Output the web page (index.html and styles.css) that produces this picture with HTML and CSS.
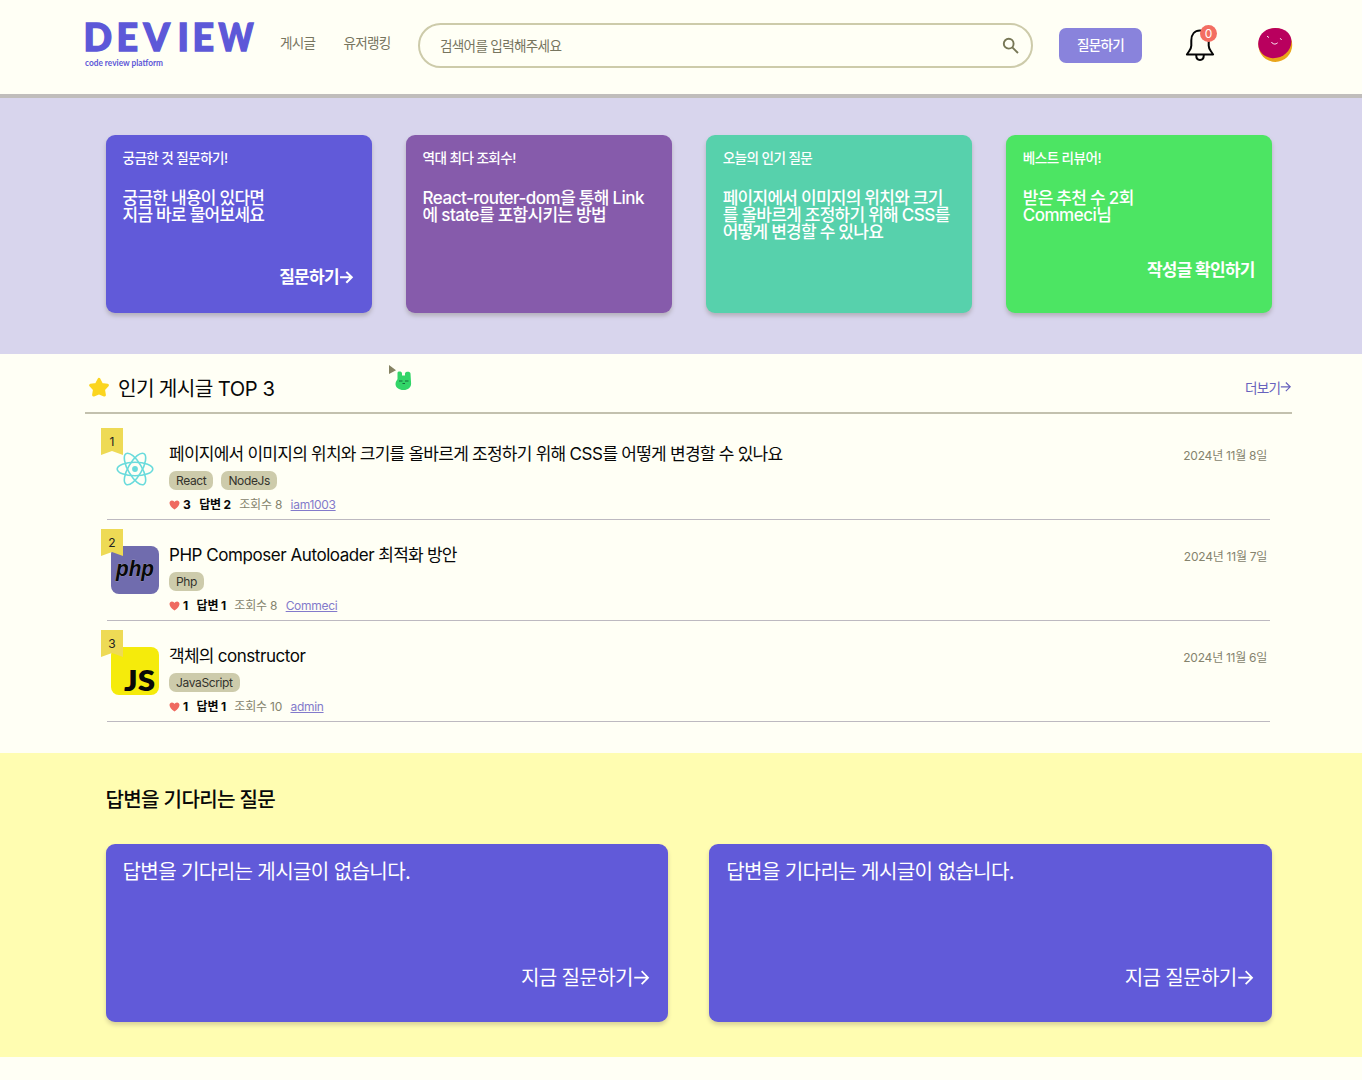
FILE: index.html
```html
<!DOCTYPE html>
<html lang="ko">
<head>
<meta charset="utf-8">
<title>DEVIEW</title>
<link rel="stylesheet" href="styles.css">
</head>
<body>
<header class="header">
  <a class="logo">
    <svg width="170" height="50" viewBox="0 0 170 50">
      <text class="logo-name" y="31" x="-1.500 31.500 58.500 92.500 107.500"><tspan>DEVIE</tspan><tspan x="133.500" textLength="35" lengthAdjust="spacingAndGlyphs">W</tspan></text>
      <text class="logo-sub" x="0" y="46" textLength="78" lengthAdjust="spacingAndGlyphs">code review platform</text>
    </svg>
  </a>
  <nav class="nav"><a>게시글</a><a>유저랭킹</a></nav>
  <div class="search">
    <span>검색어를 입력해주세요</span>
    <svg width="18" height="18" viewBox="0 0 18 18" fill="none" stroke="#777755" stroke-width="1.9"><circle cx="6.7" cy="6.7" r="4.9"/><path d="M10.3 10.3 16 16"/></svg>
  </div>
  <button class="ask">질문하기</button>
  <div class="bell">
    <svg width="32" height="34" viewBox="0 0 32 34" fill="none" stroke="#050505" stroke-width="2" stroke-linejoin="round"><path d="M7.3 12.5C7.3 6.3 10.8 2.5 16 2.5s8.7 3.8 8.7 10v5.2c0 3.6 2.2 5 4.4 8.8H2.9c2.2-3.8 4.4-5.2 4.4-8.8z"/><path d="M12.2 27c0 6.5 7.6 6.5 7.6 0"/></svg>
    <span class="badge">0</span>
  </div>
  <svg class="avatar" width="36" height="36" viewBox="0 0 36 36"><circle cx="18.3" cy="18" r="16.9" fill="#e9a51a"/><path d="M1.2 17C1.2 8 8 1.2 18 1.1 28 1 34.3 6.5 34.5 14.5 34 24 26 31.5 15.5 31.2 7 30.5 1.4 24.5 1.2 17z" fill="#b9005e"/><path d="M14.5 15.3c1.8 2.2 4 2.3 5.8.8M10.4 9.4l1.2.9M23.5 11.6l.8 1" stroke="#fff" fill="none" stroke-linecap="round"/></svg>
</header>

<section class="banner">
  <article class="card c1"><h3>궁금한 것 질문하기!</h3><p>궁금한 내용이 있다면<br>지금 바로 물어보세요</p><b>질문하기<svg class="arrow" viewBox="0 0 14 14"><path d="M1 7h11M7 1.8 12.2 7 7 12.2"/></svg></b></article>
  <article class="card c2"><h3>역대 최다 조회수!</h3><p><i>React-router-dom</i>을 통해 <i>Link</i><br>에 <i>state</i>를 포함시키는 방법</p></article>
  <article class="card c3"><h3>오늘의 인기 질문</h3><p>페이지에서 이미지의 위치와 크기<br>를 올바르게 조정하기 위해 <i>CSS</i>를<br>어떻게 변경할 수 있나요</p></article>
  <article class="card c4"><h3>베스트 리뷰어!</h3><p>받은 추천 수 <i>2</i>회<br><i>Commeci</i>님</p><b>작성글 확인하기</b></article>
</section>

<section class="popular">
  <div class="popular-head">
    <svg width="22" height="22" viewBox="0 0 22 22"><path d="M11 3.4 13.6 8.4 19.4 9.3 15.5 13.4 16.4 19 11 16.8 5.600 19 6.500 13.400 2.600 9.300 8.400 8.400z" fill="#fbd51f" stroke="#fbd51f" stroke-width="3" stroke-linejoin="round"/></svg>
    <h2>인기 게시글 <i>TOP 3</i></h2>
    <a class="more">더보기<svg class="arrow" viewBox="0 0 14 14"><path d="M1 7h11M7 1.8 12.2 7 7 12.2"/></svg></a>
    <svg class="cursor" width="26" height="28" viewBox="0 0 26 28"><path d="M1 1v9l7-3.7z" fill="#858262"/><path d="M9.500 9c0-2 4.500-2 4.500.5v2h3v-2c0-2.500 5.500-2.500 5.500 0l.6 10c0 4-3 6.500-7.600 6.500-4.500 0-8-2.500-8-6 0-3 2-4 2-5z" fill="#32d568"/><path d="M11 17h3.500M17 17h3.500M14.500 19.500h2.500" stroke="#176b3a"/></svg>
  </div>
  <div class="posts">
    <article class="post">
      <div class="thumb">
        <svg width="48" height="48" viewBox="0 0 48 48" fill="none" stroke="#69dbdc" stroke-width="1.6"><g transform="translate(24 24)"><ellipse rx="17.8" ry="6.8"/><ellipse rx="17.8" ry="6.8" transform="rotate(60)"/><ellipse rx="17.8" ry="6.8" transform="rotate(120)"/><circle r="2.9" fill="#69dbdc" stroke="none"/></g></svg>
        <span class="rank">1</span>
      </div>
      <div class="info">
        <h4>페이지에서 이미지의 위치와 크기를 올바르게 조정하기 위해 <i>CSS</i>를 어떻게 변경할 수 있나요</h4>
        <div class="tags"><span>React</span><span>NodeJs</span></div>
        <div class="stats"><b class="like"><svg viewBox="0 0 12 11"><path d="M6 10.5C-2 5 .3.5 3.2.5 4.6.5 5.6 1.3 6 2.2 6.4 1.3 7.4.5 8.8.5c2.9 0 5.2 4.5-2.8 10z"/></svg>3</b><b>답변 <i>2</i></b><span>조회수 <i>8</i></span><a>iam1003</a></div>
      </div>
      <time><i>2024</i>년 <i>11</i>월 <i>8</i>일</time>
    </article>
    <article class="post">
      <div class="thumb">
        <svg width="48" height="48" viewBox="0 0 48 48"><rect width="48" height="48" rx="8" fill="#706cae"/><text class="php" x="5" y="30" textLength="38" lengthAdjust="spacingAndGlyphs">php</text></svg>
        <span class="rank">2</span>
      </div>
      <div class="info">
        <h4><i>PHP Composer Autoloader</i> 최적화 방안</h4>
        <div class="tags"><span>Php</span></div>
        <div class="stats"><b class="like"><svg viewBox="0 0 12 11"><path d="M6 10.5C-2 5 .3.5 3.2.5 4.6.5 5.6 1.3 6 2.2 6.4 1.3 7.4.5 8.8.5c2.9 0 5.2 4.5-2.8 10z"/></svg>1</b><b>답변 <i>1</i></b><span>조회수 <i>8</i></span><a>Commeci</a></div>
      </div>
      <time><i>2024</i>년 <i>11</i>월 <i>7</i>일</time>
    </article>
    <article class="post">
      <div class="thumb">
        <svg width="48" height="48" viewBox="0 0 48 48"><rect width="48" height="48" rx="8" fill="#f5eb0b"/><text class="js" x="13" y="44" textLength="31" lengthAdjust="spacingAndGlyphs">JS</text></svg>
        <span class="rank">3</span>
      </div>
      <div class="info">
        <h4>객체의 <i>constructor</i></h4>
        <div class="tags"><span>JavaScript</span></div>
        <div class="stats"><b class="like"><svg viewBox="0 0 12 11"><path d="M6 10.5C-2 5 .3.5 3.2.5 4.6.5 5.6 1.3 6 2.2 6.4 1.3 7.4.5 8.8.5c2.9 0 5.2 4.5-2.8 10z"/></svg>1</b><b>답변 <i>1</i></b><span>조회수 <i>10</i></span><a>admin</a></div>
      </div>
      <time><i>2024</i>년 <i>11</i>월 <i>6</i>일</time>
    </article>
  </div>
</section>

<section class="waiting">
  <h2>답변을 기다리는 질문</h2>
  <div class="waiting-grid">
    <article class="wait-card"><p>답변을 기다리는 게시글이 없습니다.</p><a>지금 질문하기<svg class="arrow" viewBox="0 0 14 14"><path d="M1 7h11M7 1.8 12.2 7 7 12.2"/></svg></a></article>
    <article class="wait-card"><p>답변을 기다리는 게시글이 없습니다.</p><a>지금 질문하기<svg class="arrow" viewBox="0 0 14 14"><path d="M1 7h11M7 1.8 12.2 7 7 12.2"/></svg></a></article>
  </div>
</section>
</body>
</html>
```
FILE: styles.css
```css
* { box-sizing: border-box; margin: 0; padding: 0; }
body { background: #fffff5; color: #080808; font-family: Inter, "Noto Sans CJK KR", sans-serif; font-size: 13.6px; letter-spacing: -0.7px; overflow: hidden; }
i { font-style: normal; letter-spacing: -0.02em; }
svg { display: block; flex: none; }
.arrow { width: .86em; height: .86em; fill: none; stroke: currentColor; stroke-width: 1.4; }

.header { height: 98px; padding: 0 69px 0 85px; display: flex; align-items: flex-start; border-bottom: 4px solid #c0bdbb; }
.logo { width: 170px; margin-top: 20px; }
.logo svg { overflow: visible; }
.logo-name { font: 900 37.5px Lato, sans-serif; letter-spacing: 0; fill: #5d58d8; stroke: #5d58d8; stroke-width: 1.4; }
.logo-sub { font: 700 9px Lato, sans-serif; letter-spacing: 0; fill: #5d58d8; }
.nav { width: 138px; margin: 33px 0 0 25px; display: flex; gap: 28px; line-height: 20px; color: #77755f; white-space: nowrap; }
.search { width: 615px; height: 45px; margin-top: 23px; padding: 0 11px 0 20px; display: flex; align-items: center; justify-content: space-between; border: 2px solid #cdcbaa; border-radius: 23px; color: #77755f; }
.search span { margin-top: -2px; }
.ask { width: 83px; height: 35px; margin: 28px 0 0 26px; padding-bottom: 3px; border: 0; border-radius: 7px; background: #8983dc; color: #fff; font: 500 13.6px Inter, "Noto Sans CJK KR", sans-serif; letter-spacing: -0.7px; }
.bell { position: relative; margin: 28px 0 0 42px; }
.badge { position: absolute; left: 16px; top: -3px; width: 17px; height: 17px; border-radius: 50%; background: #f36e62; color: #fff; font-size: 12px; line-height: 17px; text-align: center; letter-spacing: 0; }
.avatar { margin: 27px 0 0 41px; }

.banner { height: 256px; padding: 37px 90px 0 105.5px; display: grid; grid-template-columns: repeat(4, 266px); gap: 34.1px; background: #d8d5ed; }
.card { height: 178px; padding: 14px 17px; display: flex; flex-direction: column; border-radius: 9px; color: #fff; box-shadow: 0 3px 4px #b4b0bb; white-space: nowrap; }
.c1 { background: #615ad9; }
.c2 { background: #865bab; }
.c3 { background: #57d1ac; }
.c4 { background: #4ce563; }
.card h3 { font-size: 13.6px; font-weight: 500; line-height: 19px; letter-spacing: -0.58px; }
.card p { margin-top: 22px; font-size: 17px; font-weight: 500; line-height: 17px; letter-spacing: -0.74px; }
.card p i { letter-spacing: -0.03em; }
.card b { display: flex; align-items: center; align-self: flex-end; margin-top: 43px; font-size: 17px; line-height: 20px; }
.card b .arrow { margin-right: 1px; stroke-width: 2; }
.c4 b { margin-top: 36px; }

.popular { height: 399px; padding: 0 70px 0 85px; }
.popular-head { position: relative; height: 60px; padding: 8px 0 0 3px; display: flex; align-items: center; border-bottom: 2px solid #c3c1ae; }
.popular-head h2 { margin-left: 8px; font-size: 20.2px; font-weight: 400; letter-spacing: -0.65px; }
.more { margin-left: auto; display: flex; align-items: center; color: #6762bd; }
.cursor { position: absolute; left: 303px; top: 10px; }
.posts { margin: 5px 22px 0; }
.post { height: 101px; padding-left: 3.5px; display: flex; align-items: flex-start; border-bottom: 1.5px solid #bdb9c0; }
.thumb { position: relative; margin-top: 26px; }
.rank { position: absolute; left: -9.5px; top: -17px; width: 22px; height: 27px; background: #eeda55; clip-path: polygon(0 0, 100% 0, 100% 100%, 50% 85%, 0 100%); color: #222; font-size: 12px; line-height: 27px; text-align: center; letter-spacing: 0; }
.info { margin: 23px 0 0 10.5px; white-space: nowrap; }
.info h4 { font-size: 17px; font-weight: 400; line-height: 24px; letter-spacing: -0.75px; }
.info h4 i { letter-spacing: -0.026em; }
.tags { margin-top: 5px; display: flex; gap: 8px; }
.tags span { height: 19px; padding: 0 7px; border-radius: 7px; background: #cdcbab; color: #33322b; font-size: 12px; line-height: 19px; letter-spacing: -0.03em; }
.stats { margin-top: 7px; display: flex; align-items: center; gap: 8.4px; height: 16px; line-height: 16px; font-size: 12px; letter-spacing: -0.18px; color: #85836d; }
.stats b { color: #080808; }
.stats a { color: #837acb; text-decoration: underline; letter-spacing: -0.025em; }
.like { display: flex; align-items: center; gap: 3px; letter-spacing: 0; }
.like svg { width: 11px; height: 10px; fill: #ef6a60; }
.post time { margin: 28px 3px 0 auto; font-size: 12px; line-height: 18px; letter-spacing: -0.35px; color: #85836d; }
.post time i { letter-spacing: -0.015em; }

.waiting { height: 304px; padding: 32px 90px 0 105.5px; background: #fffdb1; }
.waiting h2 { font-size: 20.1px; font-weight: 500; line-height: 30px; letter-spacing: -0.68px; }
.waiting-grid { margin-top: 29px; display: grid; grid-template-columns: 1fr 1fr; gap: 41px; }
.wait-card { height: 178px; padding: 14px 18px 0 17px; display: flex; flex-direction: column; border-radius: 9px; background: #615ad9; box-shadow: 0 3px 4px #d8d398; color: #fff; font-size: 20.1px; line-height: 28px; letter-spacing: -0.65px; }
.wait-card a { display: flex; align-items: center; align-self: flex-end; margin-top: 78px; }
.php { font: italic 700 22px "Liberation Sans", sans-serif; letter-spacing: 0; fill: #080808; stroke: #aaa6bc; stroke-width: .6; paint-order: stroke; }
.js { font: 800 28px Lato, sans-serif; letter-spacing: 0; fill: #080808; }
```
